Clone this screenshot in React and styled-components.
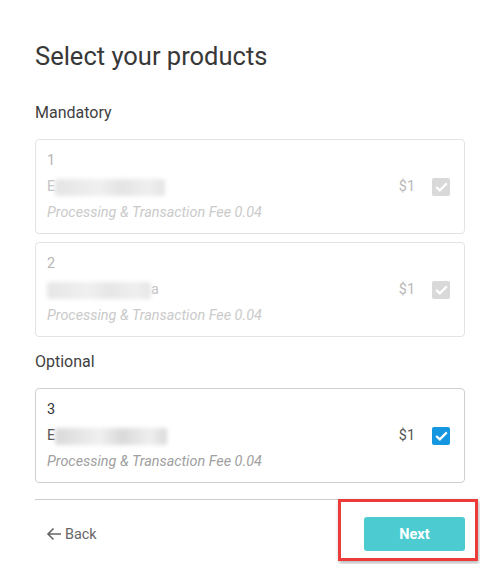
import React from 'react'
import styled, { createGlobalStyle } from 'styled-components'

const GlobalStyle = createGlobalStyle`
    body {
        margin: 0;
        background: #ffffff;
        font-family: Roboto, "Liberation Sans", sans-serif;
    }
`

const Page = styled.div`
    width: 430px;
    margin-left: 35px;
    padding: 40px 0 13px;
    display: flex;
    flex-direction: column;
`

const Title = styled.h1`
    margin: 0;
    font-size: 25.5px;
    line-height: 32px;
    font-weight: 400;
    color: #383838;
`

const SectionLabel = styled.h2`
    margin: ${props => props.first ? '31px' : '15px'} 0 16px;
    font-size: 16px;
    line-height: 20px;
    font-weight: 400;
    color: #3f3f3f;
`

const List = styled.div`
    display: flex;
    flex-direction: column;
    gap: 8px;
`

const Card = styled.div`
    border: 1px solid ${props => props.disabled ? '#e3e3e3' : '#cfcfcf'};
    border-radius: 4px;
    padding: 8px 11px 7px;
    display: flex;
    flex-direction: column;
    font-size: 14.4px;
    line-height: 26px;
`

const Number = styled.div`
    color: ${props => props.disabled ? '#b5b5b5' : '#333333'};
`

const NameRow = styled.div`
    display: flex;
    align-items: center;
    justify-content: space-between;
`

const Name = styled.div`
    display: flex;
    align-items: center;
    color: ${props => props.disabled ? '#c4c4c4' : '#555555'};
`

const Blur = styled.span`
    display: inline-block;
    width: ${props => props.width}px;
    height: 17px;
    border-radius: 3px;
    background: linear-gradient(90deg, ${props => props.shade} 0%, #f0f0f0 40%, ${props => props.shade} 60%, #efefef 85%, ${props => props.shade} 100%);
    filter: blur(2px);
`

const PriceBox = styled.div`
    display: flex;
    align-items: center;
    gap: 17px;
    padding-right: 3px;
`

const Price = styled.span`
    color: ${props => props.disabled ? '#b8b8b8' : '#555555'};
`

const Check = styled.span`
    width: 18px;
    height: 18px;
    border-radius: 2px;
    background: ${props => props.disabled ? '#d9d9d9' : '#1497e0'};
    display: flex;
    align-items: center;
    justify-content: center;
`

const Fee = styled.div`
    font-style: italic;
    color: ${props => props.disabled ? '#cacaca' : '#a0a0a0'};
`

const Footer = styled.div`
    margin-top: 16px;
    border-top: 1px solid #cccccc;
    padding-top: 17px;
    display: flex;
    align-items: center;
    justify-content: space-between;
`

const BackLink = styled.a`
    display: flex;
    align-items: center;
    gap: 3px;
    margin-left: 11px;
    font-size: 14.4px;
    color: #666666;
    cursor: pointer;
`

const NextWrap = styled.div`
    position: relative;
`

const NextButton = styled.button`
    display: block;
    width: 101px;
    height: 34px;
    border: none;
    border-radius: 3px;
    background: #4ccbd0;
    color: #ffffff;
    font-family: Roboto, "Liberation Sans", sans-serif;
    font-size: 14.5px;
    font-weight: 700;
    cursor: pointer;
`

const Highlight = styled.div`
    position: absolute;
    top: -18px;
    left: -26px;
    right: -13px;
    bottom: -10px;
    border: 3px solid #ec3b3b;
    box-shadow: 1px 2px 4px rgba(0, 0, 0, 0.3);
    pointer-events: none;
`

const CheckIcon = () => (
    <svg width="13" height="10" viewBox="0 0 13 10">
        <path d="M1.2 5 L4.8 8.4 L11.8 1.4" fill="none" stroke="#ffffff" strokeWidth="2.2" />
    </svg>
)

const products = [
    { id: 1, lead: 'E', blur: 110, tail: '', disabled: true, shade: '#e4e4e4' },
    { id: 2, lead: '', blur: 104, tail: 'a', disabled: true, shade: '#e6e6e6' },
]

const optional = [
    { id: 3, lead: 'E', blur: 112, tail: '', disabled: false, shade: '#d9d9d9' },
]

const ProductCard = ({ product }) => (
    <Card disabled={product.disabled}>
        <Number disabled={product.disabled}>{product.id}</Number>
        <NameRow>
            <Name disabled={product.disabled}>
                {product.lead}
                <Blur width={product.blur} shade={product.shade} />
                {product.tail}
            </Name>
            <PriceBox>
                <Price disabled={product.disabled}>$1</Price>
                <Check disabled={product.disabled}><CheckIcon /></Check>
            </PriceBox>
        </NameRow>
        <Fee disabled={product.disabled}>Processing &amp; Transaction Fee 0.04</Fee>
    </Card>
)

const App = () => {
    return (
        <Page>
            <GlobalStyle />
            <Title>Select your products</Title>

            <SectionLabel first>Mandatory</SectionLabel>
            <List>
                {products.map(p => <ProductCard key={p.id} product={p} />)}
            </List>

            <SectionLabel>Optional</SectionLabel>
            <List>
                {optional.map(p => <ProductCard key={p.id} product={p} />)}
            </List>

            <Footer>
                <BackLink>
                    <svg width="16" height="14" viewBox="0 0 16 14">
                        <path d="M15 7 H2 M7.5 1.5 L2 7 L7.5 12.5" fill="none" stroke="#666666" strokeWidth="1.6" />
                    </svg>
                    Back
                </BackLink>
                <NextWrap>
                    <NextButton>Next</NextButton>
                    <Highlight />
                </NextWrap>
            </Footer>
        </Page>
    )
}

export default App
